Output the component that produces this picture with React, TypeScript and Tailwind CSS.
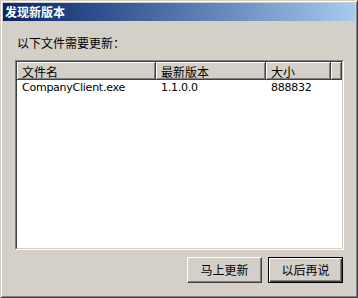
import React from "react";

const font = { fontFamily: '"Noto Sans CJK SC", "DejaVu Sans", sans-serif' };

function HeaderCell({ w, children }: { w?: string; children?: React.ReactNode }) {
  return (
    <div
      className={`${w ?? "flex-1"} h-full bg-[#d4d0c8] border-r border-b border-r-[#404040] border-b-[#404040] shadow-[inset_1px_1px_#fff,inset_-1px_-1px_#808080] pl-[5px] pt-[2px] text-[12px] leading-[15px] text-black`}
    >
      {children}
    </div>
  );
}

function Button({ children, def }: { children: React.ReactNode; def?: boolean }) {
  return (
    <div
      className={`w-[75px] h-[26px] flex items-center justify-center text-[12px] text-black bg-[#d4d0c8] ${
        def
          ? "border border-black shadow-[inset_1px_1px_#fff,inset_-1px_-1px_#404040,inset_-2px_-2px_#808080]"
          : "border border-t-[#fff] border-l-[#fff] border-r-[#404040] border-b-[#404040] shadow-[inset_-1px_-1px_#808080]"
      }`}
    >
      {children}
    </div>
  );
}

export default function App() {
  return (
    <div className="w-[358px] h-[298px] bg-[#d4d0c8]" style={font}>
      <div className="w-full h-full flex flex-col p-[2px] border border-t-[#d4d0c8] border-l-[#d4d0c8] border-r-[#404040] border-b-[#404040] shadow-[inset_1px_1px_#fff,inset_-1px_-1px_#808080]">
        <div className="h-[18px] flex items-center bg-gradient-to-r from-[#0a246a] to-[#a6caf0] pl-[2px]">
          <span className="text-white font-bold text-[12px] leading-[12px]">发现新版本</span>
        </div>
        <div className="flex-1 flex flex-col pl-[12px] pr-[11px]">
          <div className="mt-[16px] ml-[2px] text-[12px] leading-[12px] h-[12px] text-black">以下文件需要更新：</div>
          <div className="mt-[11px] h-[190px] w-[329px] border border-t-[#808080] border-l-[#808080] border-r-white border-b-white">
            <div className="w-full h-full bg-white border border-t-[#404040] border-l-[#404040] border-r-[#d4d0c8] border-b-[#d4d0c8] flex flex-col">
              <div className="h-[18px] flex">
                <HeaderCell w="w-[139px]">文件名</HeaderCell>
                <HeaderCell w="w-[110px]">最新版本</HeaderCell>
                <HeaderCell w="w-[65px]">大小</HeaderCell>
                <HeaderCell />
              </div>
              <div
                className="flex h-[14px] mt-[1px] text-[11px] leading-[14px] tracking-[-0.25px] text-black"
                style={{ fontFamily: '"DejaVu Sans", sans-serif' }}
              >
                <div className="w-[139px] pl-[5px]">CompanyClient.exe</div>
                <div className="w-[110px] pl-[5px]">1.1.0.0</div>
                <div className="w-[65px] pl-[5px]">888832</div>
              </div>
            </div>
          </div>
          <div className="mt-[7px] flex justify-end gap-[6px] pr-[1px]">
            <Button>马上更新</Button>
            <Button def>以后再说</Button>
          </div>
        </div>
      </div>
    </div>
  );
}
